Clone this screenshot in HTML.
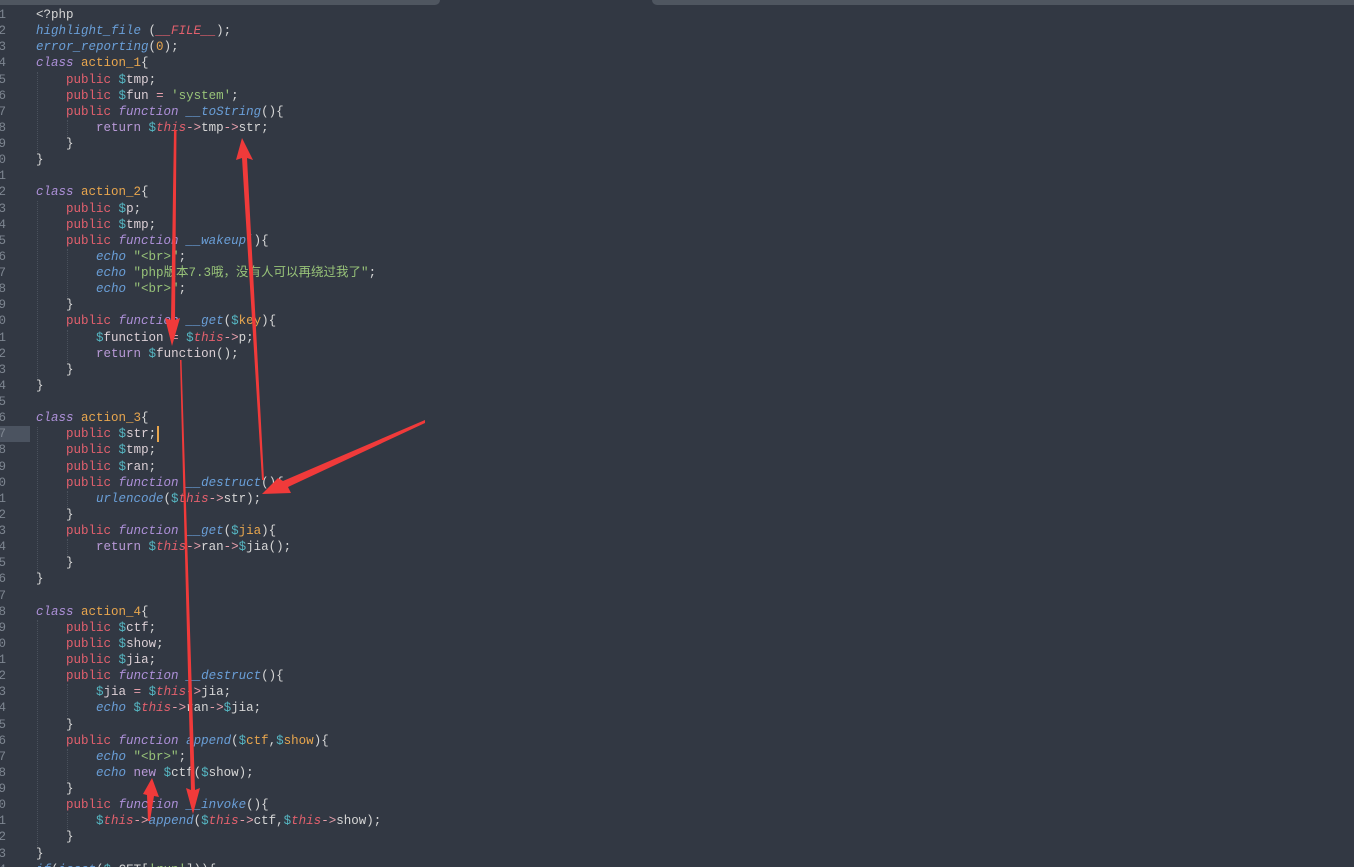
<!DOCTYPE html>
<html><head><meta charset="utf-8"><style>
html,body{margin:0;padding:0;background:#323843;width:1354px;height:867px;overflow:hidden;position:relative}
.tb{position:absolute;top:0;height:5px;background:#4f5660}
#code{position:absolute;left:36px;top:7px;margin:0;font-family:"Liberation Mono","Noto Sans CJK SC",monospace;font-size:12.5px;line-height:16.12px;color:#d6d6d6;white-space:pre}
#gut{position:absolute;left:-2px;top:7px;margin:0;font-family:"Liberation Mono",monospace;font-size:12.5px;line-height:16.12px;color:#7d8590;white-space:pre;text-align:right;width:8px;overflow:hidden;direction:rtl}
.hl{position:absolute;left:0;top:426px;width:30px;height:16px;background:#4b5360}
.k{color:#ad90d8;font-style:italic}.c{color:#e8a64e}.p{color:#e2606d}.d{color:#56b6c2}
.s{color:#98c379}.f{color:#6a9fd8;font-style:italic}.r{color:#b99ad8}.t{color:#e2606d;font-style:italic}
.a{color:#e7a0ac}.n{color:#e8a64e}.v{color:#dcd0d6}
.cur{display:inline-block;width:2px;height:16px;background:#e8a64e;vertical-align:top;margin-left:1px}
.g{position:absolute;width:0;border-left:1px dotted #4a515c}
svg{position:absolute;left:0;top:0}
</style></head><body>
<div class="tb" style="left:0;width:440px;border-radius:0 0 5px 0"></div>
<div class="tb" style="left:652px;width:702px;border-radius:0 0 0 5px"></div>
<div class="hl"></div>
<div class="g" style="left:37px;top:72px;height:80px"></div>
<div class="g" style="left:37px;top:201px;height:177px"></div>
<div class="g" style="left:37px;top:427px;height:145px"></div>
<div class="g" style="left:37px;top:620px;height:226px"></div>
<div class="g" style="left:67px;top:120px;height:16px"></div>
<div class="g" style="left:67px;top:249px;height:48px"></div>
<div class="g" style="left:67px;top:330px;height:32px"></div>
<div class="g" style="left:67px;top:491px;height:16px"></div>
<div class="g" style="left:67px;top:539px;height:16px"></div>
<div class="g" style="left:67px;top:684px;height:32px"></div>
<div class="g" style="left:67px;top:749px;height:32px"></div>
<div class="g" style="left:67px;top:813px;height:16px"></div>
<pre id="gut">1
2
3
4
5
6
7
8
9
0
1
2
3
4
5
6
7
8
9
0
1
2
3
4
5
6
7
8
9
0
1
2
3
4
5
6
7
8
9
0
1
2
3
4
5
6
7
8
9
0
1
2
3
4</pre>
<pre id="code">&lt;?php
<span class="f">highlight_file</span> (<span class="t">__FILE__</span>);
<span class="f">error_reporting</span>(<span class="n">0</span>);
<span class="k">class</span> <span class="c">action_1</span>{
    <span class="p">public</span> <span class="d">$</span><span class="v">tmp</span>;
    <span class="p">public</span> <span class="d">$</span><span class="v">fun</span> <span class="a">=</span> <span class="s">'system'</span>;
    <span class="p">public</span> <span class="k">function</span> <span class="f">__toString</span>(){
        <span class="r">return</span> <span class="d">$</span><span class="t">this</span><span class="a">-&gt;</span>tmp<span class="a">-&gt;</span>str;
    }
}

<span class="k">class</span> <span class="c">action_2</span>{
    <span class="p">public</span> <span class="d">$</span><span class="v">p</span>;
    <span class="p">public</span> <span class="d">$</span><span class="v">tmp</span>;
    <span class="p">public</span> <span class="k">function</span> <span class="f">__wakeup</span>(){
        <span class="f">echo</span> <span class="s">"&lt;br&gt;"</span>;
        <span class="f">echo</span> <span class="s">"php版本7.3哦，没有人可以再绕过我了"</span>;
        <span class="f">echo</span> <span class="s">"&lt;br&gt;"</span>;
    }
    <span class="p">public</span> <span class="k">function</span> <span class="f">__get</span>(<span class="d">$</span><span class="n">key</span>){
        <span class="d">$</span><span class="v">function</span> <span class="a">=</span> <span class="d">$</span><span class="t">this</span><span class="a">-&gt;</span>p;
        <span class="r">return</span> <span class="d">$</span><span class="v">function</span>();
    }
}

<span class="k">class</span> <span class="c">action_3</span>{
    <span class="p">public</span> <span class="d">$</span><span class="v">str</span>;<span class="cur"></span>
    <span class="p">public</span> <span class="d">$</span><span class="v">tmp</span>;
    <span class="p">public</span> <span class="d">$</span><span class="v">ran</span>;
    <span class="p">public</span> <span class="k">function</span> <span class="f">__destruct</span>(){
        <span class="f">urlencode</span>(<span class="d">$</span><span class="t">this</span><span class="a">-&gt;</span>str);
    }
    <span class="p">public</span> <span class="k">function</span> <span class="f">__get</span>(<span class="d">$</span><span class="n">jia</span>){
        <span class="r">return</span> <span class="d">$</span><span class="t">this</span><span class="a">-&gt;</span>ran<span class="a">-&gt;</span><span class="d">$</span>jia();
    }
}

<span class="k">class</span> <span class="c">action_4</span>{
    <span class="p">public</span> <span class="d">$</span><span class="v">ctf</span>;
    <span class="p">public</span> <span class="d">$</span><span class="v">show</span>;
    <span class="p">public</span> <span class="d">$</span><span class="v">jia</span>;
    <span class="p">public</span> <span class="k">function</span> <span class="f">__destruct</span>(){
        <span class="d">$</span><span class="v">jia</span> <span class="a">=</span> <span class="d">$</span><span class="t">this</span><span class="a">-&gt;</span>jia;
        <span class="f">echo</span> <span class="d">$</span><span class="t">this</span><span class="a">-&gt;</span>ran<span class="a">-&gt;</span><span class="d">$</span>jia;
    }
    <span class="p">public</span> <span class="k">function</span> <span class="f">append</span>(<span class="d">$</span><span class="n">ctf</span>,<span class="d">$</span><span class="n">show</span>){
        <span class="f">echo</span> <span class="s">"&lt;br&gt;"</span>;
        <span class="f">echo</span> <span class="r">new</span> <span class="d">$</span>ctf(<span class="d">$</span>show);
    }
    <span class="p">public</span> <span class="k">function</span> <span class="f">__invoke</span>(){
        <span class="d">$</span><span class="t">this</span><span class="a">-&gt;</span><span class="f">append</span>(<span class="d">$</span><span class="t">this</span><span class="a">-&gt;</span>ctf,<span class="d">$</span><span class="t">this</span><span class="a">-&gt;</span>show);
    }
}
<span class="f">if</span>(<span class="f">isset</span>(<span class="d">$</span>_GET[<span class="s">'run'</span>])){</pre>
<svg width="1354" height="867" viewBox="0 0 1354 867">
<g fill="#f03a3a" stroke="none">
<polygon points="174,130 176.5,130 175,320 180,318 172,346 165,318 171,320"/>
<polygon points="262,480 264,480 247,158 253,160 242,138 236,160 242,158"/>
<polygon points="425,420 425,423 288,487 291,493 262,494 278,478 283,481"/>
<polygon points="180,360 181.5,360 195,790 200,788 193,814 186,788 191,790"/>
<polygon points="148,821 150,821 154,796 159,797 152,778 143,794 147,795"/>
</g>
</svg>
</body></html>
